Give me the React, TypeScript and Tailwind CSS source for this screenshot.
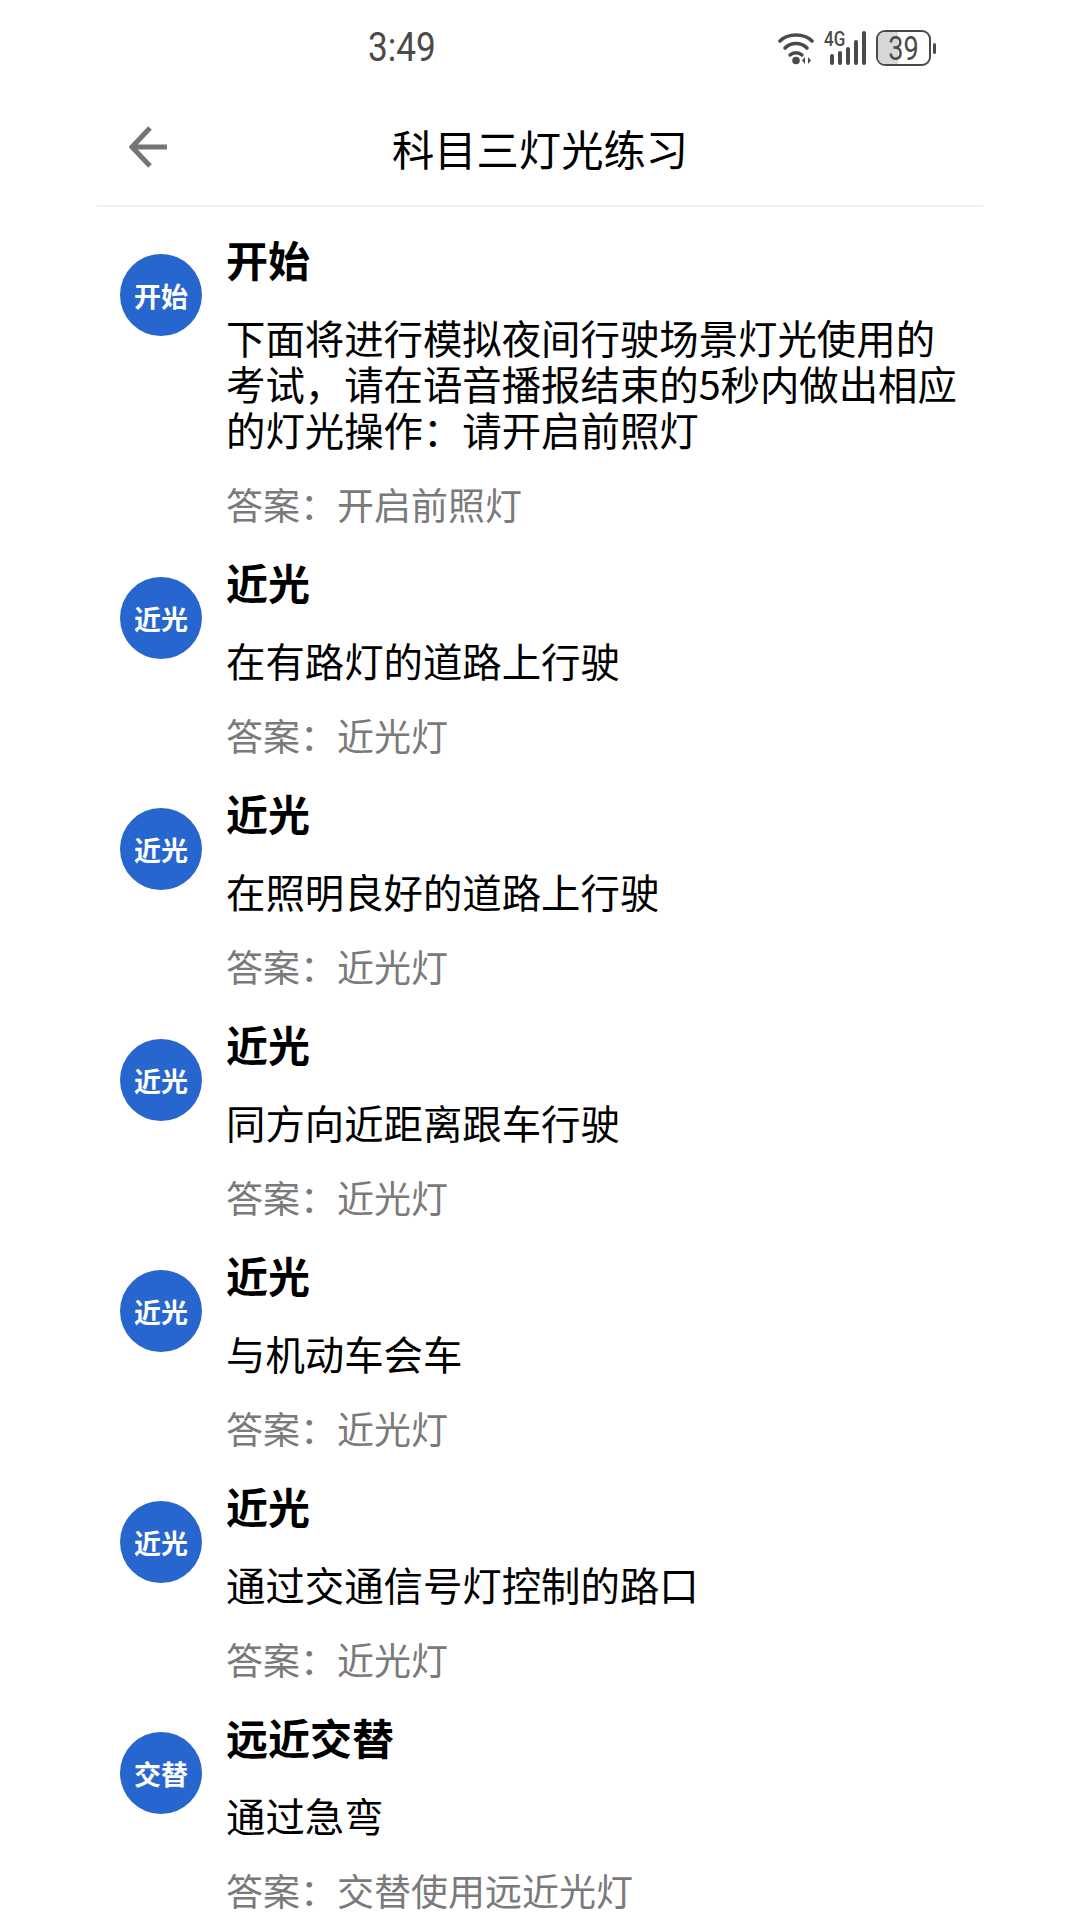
import React from 'react';

type Item = { badge: string; title: string; body: string[]; answer: string };

const COMMA = '\uFF0C';
const COLON = '\uFF1A';

const items: Item[] = [
  {
    badge: '开始',
    title: '开始',
    body: [
      '下面将进行模拟夜间行驶场景灯光使用的',
      `考试${COMMA}请在语音播报结束的5秒内做出相应`,
      `的灯光操作${COLON}请开启前照灯`,
    ],
    answer: '开启前照灯',
  },
  { badge: '近光', title: '近光', body: ['在有路灯的道路上行驶'], answer: '近光灯' },
  { badge: '近光', title: '近光', body: ['在照明良好的道路上行驶'], answer: '近光灯' },
  { badge: '近光', title: '近光', body: ['同方向近距离跟车行驶'], answer: '近光灯' },
  { badge: '近光', title: '近光', body: ['与机动车会车'], answer: '近光灯' },
  { badge: '近光', title: '近光', body: ['通过交通信号灯控制的路口'], answer: '近光灯' },
  { badge: '交替', title: '远近交替', body: ['通过急弯'], answer: '交替使用远近光灯' },
];

const cjk = "font-['Noto_Sans_CJK_SC','Noto_Sans',sans-serif]";

const StatusIcons: React.FC = () => (
  <div className="flex items-center gap-[10px] text-[#4a4a4a]">
    <svg width="36" height="34" viewBox="0 0 36 34" fill="none" stroke="currentColor" strokeLinecap="round">
      <path d="M2 10C10 2 26 2 34 10" strokeWidth="3.6" />
      <path d="M7 17C13 11 23 11 29 17" strokeWidth="3.6" />
      <path d="M12 24C15 21 21 21 24 24" strokeWidth="3.4" />
      <circle cx="18" cy="29.5" r="3.8" fill="currentColor" stroke="none" />
      <path d="M27 26l-3 3.5l3 3.5zM30 26l3 3.5l-3 3.5z" fill="currentColor" stroke="none" />
    </svg>
    <div className="relative w-[42px] h-[34px]">
      <span className="absolute left-0 top-[-1px] origin-left scale-x-[0.85] text-[20px] leading-[18px] font-medium font-['Roboto',sans-serif]">4G</span>
      <svg width="42" height="34" viewBox="0 0 42 34" fill="currentColor">
        <rect x="6" y="23" width="4" height="11" rx="2" />
        <rect x="14" y="20" width="4" height="14" rx="2" />
        <rect x="22" y="16" width="4" height="18" rx="2" />
        <rect x="30" y="9" width="4" height="25" rx="2" />
        <rect x="38" y="0" width="4" height="34" rx="2" />
      </svg>
    </div>
    <div className="flex items-center gap-[2px]">
      <div className="relative w-[55px] h-[36px] rounded-[9px] border-[2px] border-[#4a4a4a] flex items-center justify-center">
        <div className="absolute left-0 top-0 bottom-0 w-[39%] rounded-l-[7px] bg-[#d8d8d8]" />
        <span className="relative scale-x-[0.82] text-[33px] leading-none font-['Roboto',sans-serif]">39</span>
      </div>
      <div className="w-[3px] h-[11px] rounded-full bg-[#4a4a4a]" />
    </div>
  </div>
);

const Row: React.FC<{ item: Item }> = ({ item }) => (
  <div className="flex items-start gap-[24px]">
    <div className="mt-[21px] w-[82px] h-[82px] rounded-full bg-[#2866cf] flex items-center justify-center shrink-0 text-white text-[27px] font-bold leading-none">
      {item.badge}
    </div>
    <div className="flex-1">
      <div className="text-[42px] leading-[52px] font-bold text-black">{item.title}</div>
      <div className="mt-[29px] text-[39.4px] leading-[46px] text-black">
        {item.body.map((line) => (
          <div key={line} className="whitespace-nowrap">{line}</div>
        ))}
      </div>
      <div className="mt-[25px] text-[37px] leading-[54px] text-[#7a7a7a]">{`答案${COLON}${item.answer}`}</div>
    </div>
  </div>
);

const App: React.FC = () => {
  return (
    <div className={`h-[1920px] w-[1080px] overflow-hidden bg-white px-[97px] ${cjk}`}>
      <div className="h-[96px] flex items-center justify-between pl-[271px] pr-[47px]">
        <span className="inline-block origin-left scale-x-[0.88] text-[40px] leading-none text-[#4a4a4a] font-['Roboto',sans-serif]">3:49</span>
        <StatusIcons />
      </div>
      <div className="relative h-[111px] flex items-center justify-center border-b-[2px] border-[#f0f0f0]">
        <svg className="absolute left-[32px] top-[29px]" width="38" height="44" viewBox="0 0 38 44" fill="none" stroke="#757575" strokeWidth="5">
          <path d="M38 22H4" />
          <path d="M21 3L3 22L21 41" />
        </svg>
        <span className="mb-[4px] text-[42.3px] text-black leading-none">科目三灯光练习</span>
      </div>
      <div className="mt-[26px] flex flex-col gap-[25px] pl-[23px]">
        {items.map((item, i) => (
          <Row key={i} item={item} />
        ))}
      </div>
    </div>
  );
};

export default App;
